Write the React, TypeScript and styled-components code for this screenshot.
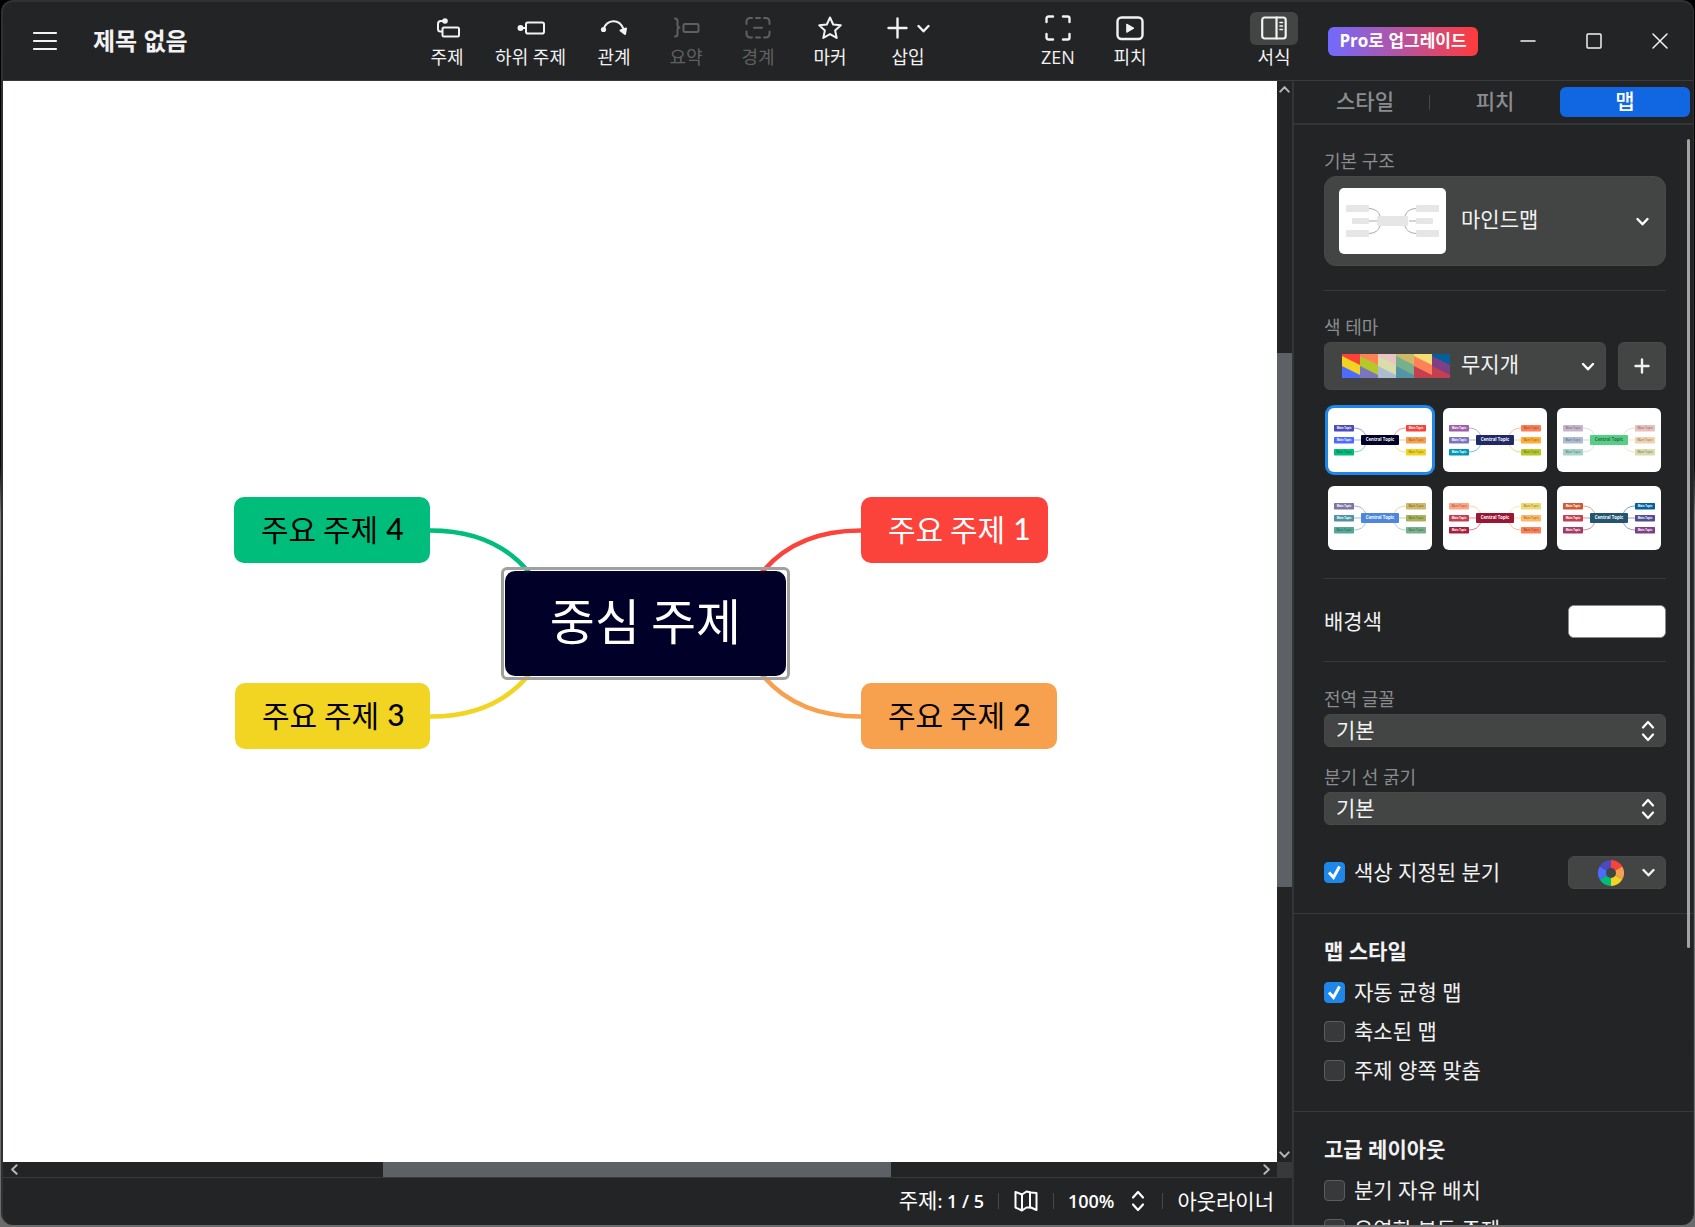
import React, { useState } from "react";
import styled, { createGlobalStyle, css } from "styled-components";

const color = {
  surface: "#232426",
  line: "#38393b",
  control: "#434544",
  thumb: "#5d6065",
  text: "#f2f2f2",
  muted: "#8b8c8e",
  blue: "#1f87e8",
};

const Global = createGlobalStyle`
  *, *::before, *::after { box-sizing: border-box; }
  html, body, #root { height: 100%; }
  body {
    margin: 0;
    background: linear-gradient(#000 0, #0a0a0a 38%, #7d7d7d 42%, #6b6b6b 100%);
    color: ${color.text};
    font-family: "Open Sans", "Noto Sans CJK KR", sans-serif;
    font-size: 21px;
    line-height: 30px;
  }
  button, select, input { font: inherit; color: inherit; margin: 0; }
  button { background: none; border: 0; padding: 0; cursor: pointer; }
`;

const Desktop = styled.div`
  height: 100vh;
  padding: 0 1px 2px;
`;

const Window = styled.div`
  height: 100%;
  display: flex;
  flex-direction: column;
  overflow: hidden;
  background: ${color.surface};
  border: 2px solid #303133;
  border-right-width: 1px;
  border-bottom-width: 0;
  border-radius: 12px;
`;

/* ---------- Title bar ---------- */

const TitleBar = styled.header`
  flex: none;
  display: flex;
  height: 79px;
  border-bottom: 1px solid #3b393b;
`;

const TitleArea = styled.div`
  flex: 1;
  display: flex;
  align-items: center;
  gap: 35px;
  padding-left: 29px;
`;

const MenuButton = styled.button`
  display: grid;
  width: 26px;
  height: 26px;
  place-items: center;
`;

const DocumentTitle = styled.h1`
  margin: 0;
  font-size: 24px;
  line-height: 32px;
  font-weight: 700;
  white-space: nowrap;
`;

const ToolGroup = styled.div`
  display: flex;
  gap: 24px;
  padding-top: 10px;
  margin-right: 96px;
  &:last-of-type { margin-right: 30px; }
`;

const Tool = styled.button<{ $wide?: boolean }>`
  display: flex;
  flex-direction: column;
  align-items: center;
  align-self: flex-start;
  min-width: ${(p) => (p.$wide ? 60 : 48)}px;
  font-size: 18px;
  line-height: 24px;
  white-space: nowrap;
  &:disabled { color: #5f6062; cursor: default; }
`;

const ToolIcon = styled.span<{ $active?: boolean }>`
  display: flex;
  align-items: center;
  justify-content: center;
  gap: 9px;
  width: 48px;
  height: 33px;
  padding-bottom: 1px;
  border-radius: 6px;
  background: ${(p) => (p.$active ? color.control : "transparent")};
`;

const UpgradeButton = styled.button`
  align-self: center;
  width: 150px;
  height: 29px;
  margin: 0 17px 0 0;
  border-radius: 6px;
  background: linear-gradient(90deg, #716aff, #ff3b3b);
  color: #fff;
  font-size: 17px;
  line-height: 28px;
  font-weight: 700;
  white-space: nowrap;
`;

const WindowButton = styled.button`
  display: grid;
  place-items: center;
  width: 66px;
  height: 78px;
`;

/* ---------- Workspace ---------- */

const Body = styled.div`
  flex: 1;
  min-height: 0;
  display: grid;
  grid-template-columns: minmax(0, 1fr) 401px;
`;

const Workspace = styled.main`
  min-height: 0;
  display: grid;
  grid-template-columns: minmax(0, 1fr) 15px;
  grid-template-rows: minmax(0, 1fr) 15px 48px;
`;

const Canvas = styled.div`
  position: relative;
  overflow: hidden;
  background: #fff;
`;

const Branches = styled.svg`
  position: absolute;
  inset: 0;
  width: 100%;
  height: 100%;
`;

const Topic = styled.div<{ $x: number; $y: number; $w: number; $fill: string; $ink: string; $central?: boolean }>`
  position: absolute;
  left: ${(p) => p.$x}px;
  top: ${(p) => p.$y}px;
  width: ${(p) => p.$w}px;
  height: 66px;
  padding: 0 0 4px 27px;
  border-radius: 10px;
  background: ${(p) => p.$fill};
  color: ${(p) => p.$ink};
  display: flex;
  align-items: center;
  gap: 8px;
  font-family: "Noto Sans CJK KR", sans-serif;
  font-size: 30px;
  line-height: 44px;
  white-space: nowrap;
  ${(p) =>
    p.$central &&
    css`
      height: 105px;
      padding: 0 0 10px;
      justify-content: center;
      font-size: 49px;
      line-height: 72px;
      &::after {
        content: "";
        position: absolute;
        inset: -4px;
        border: 3px solid #a0a0a0;
        border-radius: 6px;
      }
    `}
`;

const TopicNumber = styled.span`
  font-family: Lato, sans-serif;
  font-weight: 500;
`;

const ScrollY = styled.div`
  display: grid;
  grid-template-rows: 16px 256fr 534fr 259fr 16px;
  justify-items: center;
  align-items: center;
  color: #b4b5b7;
`;

const ScrollX = styled.div`
  display: grid;
  grid-template-columns: 22px 358fr 508fr 364fr 22px;
  justify-items: center;
  align-items: center;
  color: #b4b5b7;
`;

const Thumb = styled.div`
  align-self: stretch;
  justify-self: stretch;
  background: ${color.thumb};
`;

const ScrollCorner = styled.div`
  background: ${color.line};
`;

const StatusBar = styled.footer`
  grid-column: 1 / -1;
  display: flex;
  align-items: center;
  justify-content: flex-end;
  gap: 14px;
  padding: 0 18px 2px 0;
  border-top: 1px solid ${color.line};
  white-space: nowrap;
  color: #fff;
`;

const Strong = styled.span`
  font-size: 18px;
  font-weight: 600;
`;

const Separator = styled.span`
  width: 1px;
  height: 16px;
  background: #48494b;
`;

const IconButton = styled.button<{ $narrow?: boolean }>`
  display: grid;
  place-items: center;
  width: ${(p) => (p.$narrow ? 20 : 26)}px;
  height: 26px;
`;

/* ---------- Format panel ---------- */

const Panel = styled.aside`
  min-height: 0;
  display: flex;
  flex-direction: column;
  border-left: 2px solid #343537;
`;

const Tabs = styled.div`
  flex: none;
  display: grid;
  grid-template-columns: repeat(3, 1fr);
  align-items: center;
  height: 44px;
  padding: 0 3px 0 6px;
  border-bottom: 2px solid #343537;
`;

const Tab = styled.button<{ $divider?: boolean }>`
  display: flex;
  align-items: center;
  height: 30px;
  border-radius: 6px;
  color: ${color.muted};
  font-weight: 500;
  &[aria-selected="true"] { background: #1166e2; color: #fff; }
  &::before { content: ""; width: 1px; }
  &::after {
    content: "";
    width: 1px;
    height: 15px;
    background: ${(p) => (p.$divider ? "#48494b" : "transparent")};
  }
`;

const TabText = styled.span`
  flex: 1;
  padding-bottom: 2px;
`;

const PanelBody = styled.div`
  flex: 1;
  min-height: 0;
  position: relative;
  overflow: hidden;
`;

const PanelThumb = styled.div`
  position: absolute;
  top: 14px;
  right: 3px;
  width: 3px;
  height: 73.5%;
  border-radius: 2px;
  background: #a3a3a5;
`;

const Group = styled.section<{ $pad: string }>`
  padding: ${(p) => p.$pad};
  border-bottom: 1px solid ${color.line};
`;

const Section = styled.div<{ $pad: string; $line?: boolean }>`
  padding: ${(p) => p.$pad};
  border-bottom: ${(p) => (p.$line ? `1px solid ${color.line}` : "0")};
`;

const Caption = styled.label`
  display: block;
  height: 29px;
  color: ${color.muted};
  font-size: 18px;
  line-height: 28px;
`;

const Row = styled.div<{ $h: number }>`
  display: flex;
  align-items: center;
  justify-content: space-between;
  height: ${(p) => p.$h}px;
`;

const Picker = styled.div<{ $h: number; $grow?: boolean }>`
  display: grid;
  align-items: center;
  height: ${(p) => p.$h}px;
  flex: ${(p) => (p.$grow ? 1 : "none")};
  & > * { grid-area: 1 / 1; }
  & > svg { pointer-events: none; justify-self: end; }
`;

const PickerSelect = styled.select<{ $large?: boolean; $round?: boolean }>`
  appearance: none;
  width: 100%;
  height: 100%;
  padding: ${(p) => (p.$large ? "0 40px 4px 136px" : "0 40px 2px 11px")};
  border: 1px solid #48494a;
  border-radius: ${(p) => (p.$round ? 12 : 6)}px;
  background: ${color.control};
  line-height: 28px;
`;

const Preview = styled.span<{ $inset: number }>`
  pointer-events: none;
  display: flex;
  align-items: center;
  justify-self: start;
  margin-left: ${(p) => p.$inset}px;
`;

const PreviewCard = styled.span`
  display: block;
  width: 107px;
  height: 66px;
  border-radius: 5px;
  background: #fff;
`;

const AddButton = styled.button`
  display: grid;
  place-items: center;
  width: 48px;
  height: 48px;
  margin-left: 12px;
  border-radius: 6px;
  border: 1px solid #48494a;
  background: ${color.control};
`;

const ThemeGrid = styled.div`
  display: grid;
  grid-template-columns: repeat(3, 104px);
  justify-content: space-between;
  row-gap: 14px;
  padding: 18px 5px 0 4px;
`;

const ThemeCard = styled.button`
  width: 104px;
  height: 64px;
  border-radius: 6px;
  background: #fff;
  overflow: hidden;
  &[aria-pressed="true"] { box-shadow: 0 0 0 3px ${color.blue}; }
  svg { display: block; }
`;

const ColorInput = styled.input`
  appearance: none;
  width: 98px;
  height: 33px;
  padding: 0;
  border: 1px solid #8a8b8c;
  border-radius: 6px;
  background: #fff;
  &::-webkit-color-swatch-wrapper { padding: 0; }
  &::-webkit-color-swatch { border: 0; border-radius: 4px; }
`;

const BranchColors = styled.button`
  display: flex;
  align-items: center;
  justify-content: flex-end;
  gap: 18px;
  width: 98px;
  height: 33px;
  padding-right: 10px;
  border-radius: 6px;
  border: 1px solid #48494a;
  background: ${color.control};
`;

const CheckLabel = styled.label`
  display: grid;
  grid-template-columns: 21px auto;
  column-gap: 9px;
  align-items: center;
  justify-content: start;
  height: 39px;
  svg { grid-area: 1 / 1; pointer-events: none; }
`;

const CheckText = styled.span`
  padding-bottom: 2px;
`;

const CheckBox = styled.input`
  appearance: none;
  grid-area: 1 / 1;
  width: 21px;
  height: 21px;
  border: 1px solid #5c5d5f;
  border-radius: 4px;
  background: #38393b;
  &:checked { background: ${color.blue}; border-color: ${color.blue}; }
`;

const GroupTitle = styled.h2`
  margin: 0 0 8px;
  height: 28px;
  font-size: 21px;
  line-height: 28px;
  font-weight: 700;
`;

/* ---------- Icons ---------- */

const Svg = ({ w, h, children, sw = 2 }: { w: number; h: number; sw?: number; children: React.ReactNode }) => (
  <svg width={w} height={h} viewBox={`0 0 ${w} ${h}`} fill="none" stroke="currentColor" strokeWidth={sw}
    strokeLinecap="round" strokeLinejoin="round" aria-hidden="true">
    {children}
  </svg>
);

const Chevron = ({ dir = "down", size = 13 }: { dir?: "down" | "up" | "left" | "right"; size?: number }) => {
  const turn = { down: 0, left: 90, up: 180, right: 270 }[dir];
  return (
    <svg width={size} height={size} viewBox="0 0 13 13" fill="none" stroke="currentColor" strokeWidth="2.4"
      strokeLinecap="round" strokeLinejoin="round" aria-hidden="true">
      <path d="M1.5 4 6.5 9.3 11.5 4" transform={`rotate(${turn} 6.5 6.5)`} />
    </svg>
  );
};

const UpDown = ({ pad = 0 }: { pad?: number }) => (
  <svg width={14 + pad} height="22" viewBox={`0 0 ${14 + pad} 22`} fill="none" stroke="#fff" strokeWidth="2.2"
    strokeLinecap="round" strokeLinejoin="round" aria-hidden="true">
    <path d="M2 7.5 7 2l5 5.5M2 14.5 7 20l5-5.5" />
  </svg>
);

const icons = {
  topic: (
    <Svg w={26} h={24}>
      <path d="M8 15.5H6.500Q4 15.500 4 13V8Q4 5 7 5H10" />
      <circle cx="11" cy="5" r="2.800" fill="currentColor" stroke="none" />
      <rect x="8.500" y="11.500" width="16.500" height="9" rx="1.500" />
    </Svg>
  ),
  subtopic: (
    <Svg w={28} h={24}>
      <circle cx="3.500" cy="12" r="3" fill="currentColor" stroke="none" />
      <path d="M5 12h4" />
      <rect x="9" y="6.500" width="18" height="11" rx="1.800" />
    </Svg>
  ),
  relation: (
    <Svg w={28} h={24}>
      <path d="M3.500 13C7 3.500 19 2 23.500 13" />
      <circle cx="3.500" cy="13.500" r="2.600" fill="currentColor" stroke="none" />
      <path d="M20.500 14.500 26 12.500 25 18Z" fill="currentColor" />
    </Svg>
  ),
  summary: (
    <Svg w={28} h={24}>
      <path d="M3 2.500c2 0 2.500 1 2.500 2.500v4c0 1.500.5 2.500 2 2.500-1.500 0-2 1-2 2.500v4c0 1.500-.5 2.500-2.500 2.500" />
      <rect x="11.500" y="8" width="15" height="8" rx="1.500" />
    </Svg>
  ),
  boundary: (
    <Svg w={26} h={24}>
      <path d="M1.500 8V5.500A3.500 3.500 0 0 1 5 2h2M11 2h4M19 2h2a3.500 3.500 0 0 1 3.500 3.500V8M24.500 15.500V18a3.500 3.500 0 0 1-3.500 3.500h-2M15 21.500h-4M7 21.500H5A3.500 3.500 0 0 1 1.500 18v-2.500M9 11.800h8" />
    </Svg>
  ),
  marker: (
    <Svg w={26} h={26}>
      <path d="m13 2.500 3.200 7 7.600.8-5.700 5.100 1.600 7.500-6.700-3.800-6.700 3.800 1.600-7.500L2.200 10.300l7.600-.8Z" />
    </Svg>
  ),
  plus: (
    <Svg w={21} h={22} sw={2.400}>
      <path d="M10.500 1.500v19M1.500 11h18" />
    </Svg>
  ),
  zen: (
    <Svg w={26} h={28} sw={2.400}>
      <path d="M1.500 8V4.500a2 2 0 0 1 2-2H8M18 2.500h4.500a2 2 0 0 1 2 2V8M24.500 20v3.500a2 2 0 0 1-2 2H18M8 25.500H3.500a2 2 0 0 1-2-2V20" />
    </Svg>
  ),
  pitch: (
    <Svg w={28} h={26} sw={2.400}>
      <rect x="1.500" y="2.500" width="25" height="21.500" rx="4" />
      <path d="M11 9.200 18 13.200 11 17.200Z" fill="currentColor" strokeWidth="1" />
    </Svg>
  ),
  format: (
    <Svg w={26} h={24} sw={2.200}>
      <rect x="1.200" y="1.500" width="23.500" height="21" rx="2.500" />
      <path d="M15.500 1.500v21" />
      <path d="M19 6.500h2.500M19 10h2.500M19 13.500h2.500" strokeWidth="1.600" />
    </Svg>
  ),
};

const spoke = (cx: number, cy: number, r: number, a: number) => {
  const t = (a * Math.PI) / 180;
  return `${cx + r * Math.sin(t)} ${cy - r * Math.cos(t)}`;
};

const ColorWheel = () => (
  <svg width="26" height="26" viewBox="0 0 26 26" aria-hidden="true">
    {["#fa423b", "#f79f4d", "#f3d321", "#00bd7b", "#4d6bff", "#4d49be"].map((c, i) => (
      <path key={c} fill={c} d={`M13 13 L${spoke(13, 13, 13, i * 60)} A13 13 0 0 1 ${spoke(13, 13, 13, i * 60 + 60)}Z`} />
    ))}
    <circle cx="13" cy="13" r="5" fill={color.control} />
  </svg>
);

const swatches = [
  ["#fa423b", "#f3d321", "#4d6bff"],
  ["#ff8157", "#b5c82a", "#7a75bd"],
  ["#e8c4c2", "#dadcac", "#adbdd1"],
  ["#cfb868", "#77b08b", "#5395a6"],
  ["#f4dd72", "#ff8257", "#c43f50"],
  ["#04609c", "#7f3f85", "#c43f50"],
];

const SwatchStrip = () => (
  <svg width="108" height="24" viewBox="0 0 108 24" aria-hidden="true">
    {swatches.map(([top, mid, low], i) => (
      <g key={i} transform={`translate(${i * 18} 0)`}>
        <rect width="18" height="24" fill={mid} />
        <path d="M0 0H18V11L0 2Z" fill={top} />
        <path d="M0 12 18 21V24H0Z" fill={low} />
      </g>
    ))}
  </svg>
);

const StructureArt = () => (
  <svg width="107" height="66" viewBox="0 0 107 66" aria-hidden="true">
    <path d="M30 20.500Q39 21 41 28M30 45.500Q39 45 41 38M30 33H38M77 20.500Q68 21 66 28M77 45.500Q68 45 66 38M77 33H70"
      fill="none" stroke="#a9a9a9" />
    <g fill="#e6e6e6">
      <rect x="7" y="17" width="23" height="7" rx="1" />
      <rect x="13" y="30" width="17" height="6" rx="1" />
      <rect x="7" y="42" width="23" height="7" rx="1" />
      <rect x="38" y="28" width="31" height="10" rx="1" />
      <rect x="77" y="17" width="23" height="7" rx="1" />
      <rect x="77" y="30" width="17" height="6" rx="1" />
      <rect x="77" y="42" width="23" height="7" rx="1" />
    </g>
  </svg>
);

type Theme = { center: string; ink: string; left: string[]; right: string[]; light: string };

/* `light` marks, for left then right branches, which labels are white */
const themes: Theme[] = [
  { center: "#000028", ink: "#fff", left: ["#4d49be", "#4d6bff", "#00bd7b"], right: ["#fa423b", "#f79f4d", "#f3d321"], light: "110100" },
  { center: "#202867", ink: "#fff", left: ["#9c5fa8", "#7a75bd", "#0098b9"], right: ["#fa8155", "#ffad36", "#b5c82a"], light: "111000" },
  { center: "#55cf85", ink: "#2d6b48", left: ["#c6b7ca", "#adbdd1", "#a6d4c9"], right: ["#e8c1bf", "#f2d2ae", "#d9dcac"], light: "000000" },
  { center: "#4d86dc", ink: "#fff", left: ["#7b75a2", "#4f92a5", "#55a898"], right: ["#cfb868", "#a7b25f", "#77b08b"], light: "110000" },
  { center: "#991635", ink: "#fff", left: ["#ffa382", "#c43f50", "#a81c3c"], right: ["#efd970", "#ffb866", "#fa8155"], light: "011000" },
  { center: "#245570", ink: "#fff", left: ["#cc5a34", "#c43f50", "#a33b66"], right: ["#04609c", "#544b98", "#7f3f85"], light: "111111" },
];

const boxTop = [17, 29, 41];
const leftCurve = ["M26 20Q35 20 38 28", "M26 32H34", "M26 44Q35 44 38 36"];
const rightCurve = ["M78 20Q69 20 66 28", "M78 32H70", "M78 44Q69 44 66 36"];

const ThemeArt = ({ theme }: { theme: Theme }) => (
  <svg width="104" height="64" viewBox="0 0 104 64" fontFamily="'Open Sans', sans-serif" textAnchor="middle" aria-hidden="true">
    {[...theme.left, ...theme.right].map((c, i) => {
      const row = i % 3;
      const right = i > 2;
      const white = theme.light[i] === "1";
      return (
        <g key={i}>
          <path d={(right ? rightCurve : leftCurve)[row]} fill="none" stroke={c} strokeOpacity="0.7" strokeWidth="0.8" />
          <rect x={right ? 78 : 6} y={boxTop[row]} width="20" height="6.500" rx="0.800" fill={c} />
          <text x={right ? 88 : 16} y={boxTop[row] + 4.300} fontSize={white ? 2.7 : 3} fontWeight={white ? 700 : 400}
            fill={white ? "#fff" : "#0009"}>Main Topic</text>
        </g>
      );
    })}
    <rect x="33" y="27" width="38" height="10" rx="1" fill={theme.center} />
    <text x="52" y="33.300" fontSize="4.300" fontWeight="700" fill={theme.ink}>Central Topic</text>
  </svg>
);

/* ---------- Data ---------- */

const editTools = [
  { label: "주제", icon: icons.topic },
  { label: "하위 주제", icon: icons.subtopic },
  { label: "관계", icon: icons.relation },
  { label: "요약", icon: icons.summary, disabled: true },
  { label: "경계", icon: icons.boundary, disabled: true },
  { label: "마커", icon: icons.marker },
];

const topics = [
  { n: 1, x: 858, y: 416, w: 187, fill: "#fb433c", ink: "#fff" },
  { n: 2, x: 858, y: 602, w: 196, fill: "#f7a04e", ink: "#000" },
  { n: 3, x: 232, y: 602, w: 195, fill: "#f2d422", ink: "#000" },
  { n: 4, x: 231, y: 416, w: 196, fill: "#00bd7b", ink: "#000" },
];

const Check = ({ label, on = false }: { label: string; on?: boolean }) => {
  const [checked, setChecked] = useState(on);
  return (
    <CheckLabel>
      <CheckBox type="checkbox" checked={checked} onChange={(e) => setChecked(e.target.checked)} />
      {checked && (
        <svg width="21" height="21" viewBox="0 0 21 21" fill="none" stroke="#fff" strokeWidth="3" aria-hidden="true">
          <path d="M5 10.500 9.500 15.500 15.500 4.500" />
        </svg>
      )}
      <CheckText>{label}</CheckText>
    </CheckLabel>
  );
};

export default function App() {
  const [tab, setTab] = useState(2);
  const [theme, setTheme] = useState(0);

  return (
    <Desktop>
      <Global />
      <Window>
        <TitleBar>
          <TitleArea>
            <MenuButton aria-label="메뉴">
              <Svg w={26} h={20} sw={2.200}><path d="M2 2h22M2 10h22M2 18h22" /></Svg>
            </MenuButton>
            <DocumentTitle>제목 없음</DocumentTitle>
          </TitleArea>
          <ToolGroup>
            {editTools.map((t) => (
              <Tool key={t.label} disabled={t.disabled}>
                <ToolIcon>{t.icon}</ToolIcon>
                {t.label}
              </Tool>
            ))}
            <Tool $wide>
              <ToolIcon>{icons.plus}<Chevron /></ToolIcon>
              삽입
            </Tool>
          </ToolGroup>
          <ToolGroup>
            <Tool><ToolIcon>{icons.zen}</ToolIcon>ZEN</Tool>
            <Tool><ToolIcon>{icons.pitch}</ToolIcon>피치</Tool>
          </ToolGroup>
          <ToolGroup>
            <Tool><ToolIcon $active>{icons.format}</ToolIcon>서식</Tool>
          </ToolGroup>
          <UpgradeButton>Pro로 업그레이드</UpgradeButton>
          <WindowButton aria-label="최소화"><Svg w={16} h={16} sw={1.500}><path d="M1 8h14" /></Svg></WindowButton>
          <WindowButton aria-label="최대화"><Svg w={16} h={16} sw={1.500}><rect x="1" y="1" width="14" height="14" rx="1" /></Svg></WindowButton>
          <WindowButton aria-label="닫기"><Svg w={16} h={16} sw={1.500}><path d="m1 1 14 14M15 1 1 15" /></Svg></WindowButton>
        </TitleBar>

        <Body>
          <Workspace>
            <Canvas>
              <Branches fill="none" strokeWidth="4.500" aria-hidden="true">
                <path stroke="#00bd7b" d="M426 449.500Q489 449 524 489L530 496" />
                <path stroke="#f2d422" d="M426 635.500Q489 636 524 596L530 589" />
                <path stroke="#fb433c" d="M859 449.500Q796 449 761 489L755 496" />
                <path stroke="#f7a04e" d="M859 635.500Q796 636 761 596L755 589" />
              </Branches>
              {topics.map((t) => (
                <Topic key={t.n} $x={t.x} $y={t.y} $w={t.w} $fill={t.fill} $ink={t.ink}>
                  주요 주제 <TopicNumber>{t.n}</TopicNumber>
                </Topic>
              ))}
              <Topic $x={502} $y={490} $w={281} $fill="#000028" $ink="#fff" $central>중심 주제</Topic>
            </Canvas>
            <ScrollY>
              <Chevron dir="up" size={11} />
              <span />
              <Thumb />
              <span />
              <Chevron dir="down" size={11} />
            </ScrollY>
            <ScrollX>
              <Chevron dir="left" size={11} />
              <span />
              <Thumb />
              <span />
              <Chevron dir="right" size={11} />
            </ScrollX>
            <ScrollCorner />
            <StatusBar>
              <span>주제<Strong>: 1 / 5</Strong></span>
              <Separator />
              <IconButton aria-label="미니맵">
                <Svg w={24} h={22}>
                  <path d="M1.500 2 8 4.500 12.500 1.500 17 2.500 22.500 3V20L17 17.500 12.500 17.500 8 20.500 1.500 17.500Z" />
                  <path d="M8 4.500v15M16 2.500v15" />
                </Svg>
              </IconButton>
              <Separator />
              <Strong>100%</Strong>
              <IconButton $narrow aria-label="확대/축소"><UpDown /></IconButton>
              <Separator />
              <button>아웃라이너</button>
            </StatusBar>
          </Workspace>

          <Panel>
            <Tabs role="tablist">
              {["스타일", "피치", "맵"].map((name, i) => (
                <Tab key={name} role="tab" aria-selected={tab === i} $divider={i === 0} onClick={() => setTab(i)}>
                  <TabText>{name}</TabText>
                </Tab>
              ))}
            </Tabs>
            <PanelBody>
              <Group $pad="0 27px 21px 30px">
                <Section $pad="22px 0 24px" $line>
                  <Caption htmlFor="structure">기본 구조</Caption>
                  <Picker $h={90}>
                    <PickerSelect id="structure" $large $round><option>마인드맵</option></PickerSelect>
                    <Preview $inset={15}><PreviewCard><StructureArt /></PreviewCard></Preview>
                    <svg width="31" height="13" viewBox="0 0 31 13" fill="none" stroke="#fff" strokeWidth="2.400" strokeLinecap="round" strokeLinejoin="round" aria-hidden="true"><path d="M2.500 4 7.500 9.300 12.500 4" /></svg>
                  </Picker>
                </Section>
                <Section $pad="22px 0 28px" $line>
                  <Caption htmlFor="theme">색 테마</Caption>
                  <Row $h={48}>
                    <Picker $h={48} $grow>
                      <PickerSelect id="theme" $large><option>무지개</option></PickerSelect>
                      <Preview $inset={18}><SwatchStrip /></Preview>
                      <svg width="25" height="13" viewBox="0 0 25 13" fill="none" stroke="#fff" strokeWidth="2.400" strokeLinecap="round" strokeLinejoin="round" aria-hidden="true"><path d="M2 4 7 9.300 12 4" /></svg>
                    </Picker>
                    <AddButton aria-label="테마 추가"><Svg w={16} h={16} sw={2.400}><path d="M8 1.500v13M1.500 8h13" /></Svg></AddButton>
                  </Row>
                  <ThemeGrid>
                    {themes.map((t, i) => (
                      <ThemeCard key={i} aria-label={`테마 ${i + 1}`} aria-pressed={theme === i} onClick={() => setTheme(i)}>
                        <ThemeArt theme={t} />
                      </ThemeCard>
                    ))}
                  </ThemeGrid>
                </Section>
                <Section $pad="25px 0 23px" $line>
                  <Row $h={34}>
                    <label htmlFor="background">배경색</label>
                    <ColorInput id="background" type="color" defaultValue="#ffffff" />
                  </Row>
                </Section>
                <Section $pad="23px 0 12px">
                  <Caption htmlFor="font">전역 글꼴</Caption>
                  <Picker $h={33}>
                    <PickerSelect id="font"><option>기본</option></PickerSelect>
                    <UpDown pad={11} />
                  </Picker>
                </Section>
                <Section $pad="4px 0 28px">
                  <Caption htmlFor="branch">분기 선 굵기</Caption>
                  <Picker $h={33}>
                    <PickerSelect id="branch"><option>기본</option></PickerSelect>
                    <UpDown pad={11} />
                  </Picker>
                </Section>
                <Row $h={39}>
                  <Check label="색상 지정된 분기" on />
                  <BranchColors aria-label="분기 색상"><ColorWheel /><Chevron /></BranchColors>
                </Row>
              </Group>
              <Group $pad="23px 27px 21px 30px">
                <GroupTitle>맵 스타일</GroupTitle>
                <Check label="자동 균형 맵" on />
                <Check label="축소된 맵" />
                <Check label="주제 양쪽 맞춤" />
              </Group>
              <Group $pad="23px 27px 21px 30px">
                <GroupTitle>고급 레이아웃</GroupTitle>
                <Check label="분기 자유 배치" />
                <Check label="유연한 부동 주제" />
              </Group>
              <PanelThumb />
            </PanelBody>
          </Panel>
        </Body>
      </Window>
    </Desktop>
  );
}
